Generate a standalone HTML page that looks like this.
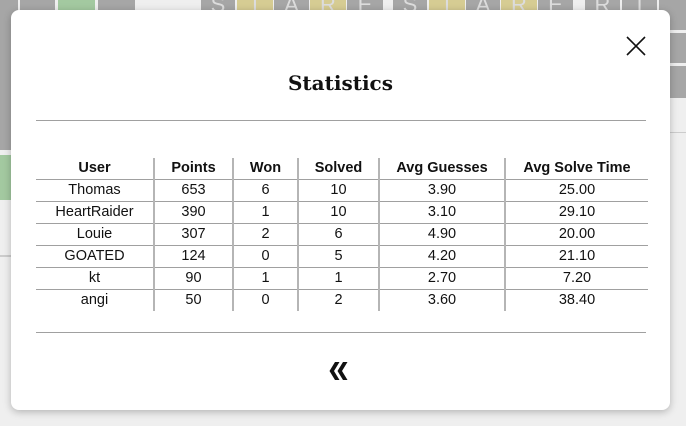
<!DOCTYPE html>
<html><head><style>
html,body{margin:0;padding:0}
body{width:686px;height:426px;position:relative;overflow:hidden;background:#efefef;font-family:"Liberation Sans",sans-serif}
.t{position:absolute;background:#a6a6a6;color:#ddd;font-size:22px;text-align:center;line-height:10px}
.y{background:#d6cc93}.g{background:#a3c9a0}
.modal{position:absolute;left:11px;top:10px;width:659px;height:400px;background:#fff;border-radius:8px;box-shadow:0 2px 8px rgba(0,0,0,.25)}
h1{position:absolute;left:0;right:0;top:59px;margin:0;text-align:center;font-family:"DejaVu Serif","Liberation Serif",serif;font-weight:bold;font-size:20px;color:#111;line-height:28px}
.hr{position:absolute;left:25px;width:610px;height:1px;background:#a0a0a0}
table{position:absolute;left:25px;top:148px;border-collapse:collapse;font-size:14.5px;color:#111}
td,th{padding:0;text-align:center;height:21px;line-height:21px}
th{font-weight:bold;height:21px;font-size:14.5px}
td+td,th+th{border-left:2px solid #b5b5b5}
tr{border-bottom:1px solid #a0a0a0}
tr:last-child{border-bottom:none}
.x{position:absolute;left:614px;top:25px}
.ch{position:absolute;left:317px;top:352px}
</style></head><body>
<div class="t" style="left:0;top:0;width:18px;height:150px"></div>
<div class="t" style="left:0;top:155px;width:18px;height:45px;background:#a3c9a0"></div>
<div class="t" style="left:20px;top:0;width:35px;height:10px"></div>
<div class="t g" style="left:58px;top:0;width:37px;height:10px"></div>
<div class="t" style="left:98px;top:0;width:37px;height:10px"></div>
<div class="t" style="left:201px;top:0;width:34px;height:10px">S</div>
<div class="t y" style="left:237px;top:0;width:36px;height:10px">T</div>
<div class="t" style="left:274px;top:0;width:35px;height:10px">A</div>
<div class="t y" style="left:310px;top:0;width:36px;height:10px">R</div>
<div class="t" style="left:347px;top:0;width:36px;height:10px">E</div>
<div class="t" style="left:393px;top:0;width:34px;height:10px">S</div>
<div class="t y" style="left:429px;top:0;width:36px;height:10px">T</div>
<div class="t" style="left:466px;top:0;width:34px;height:10px">A</div>
<div class="t y" style="left:501px;top:0;width:36px;height:10px">R</div>
<div class="t" style="left:538px;top:0;width:35px;height:10px">E</div>
<div class="t" style="left:585px;top:0;width:35px;height:10px">R</div>
<div class="t" style="left:622px;top:0;width:35px;height:10px">I</div>
<div class="t" style="left:659px;top:0;width:27px;height:30px"></div>
<div class="t" style="left:659px;top:33px;width:27px;height:30px"></div>
<div class="t" style="left:659px;top:66px;width:27px;height:32px"></div>
<div style="position:absolute;left:0;top:255px;width:20px;height:2px;background:#ccc"></div>
<div style="position:absolute;left:670px;top:132px;width:16px;height:1px;background:#ccc"></div>
<div class="modal">
<svg class="x" width="22" height="22" viewBox="0 0 22 22"><path d="M2 2L20 20M20 2L2 20" stroke="#111" stroke-width="1.6"/></svg>
<h1>Statistics</h1>
<div class="hr" style="top:110px"></div>
<table>
<tr><th style="width:117px">User</th><th style="width:77px">Points</th><th style="width:63px">Won</th><th style="width:79px">Solved</th><th style="width:124px">Avg Guesses</th><th style="width:142px">Avg Solve Time</th></tr>
<tr><td>Thomas</td><td>653</td><td>6</td><td>10</td><td>3.90</td><td>25.00</td></tr>
<tr><td>HeartRaider</td><td>390</td><td>1</td><td>10</td><td>3.10</td><td>29.10</td></tr>
<tr><td>Louie</td><td>307</td><td>2</td><td>6</td><td>4.90</td><td>20.00</td></tr>
<tr><td>GOATED</td><td>124</td><td>0</td><td>5</td><td>4.20</td><td>21.10</td></tr>
<tr><td>kt</td><td>90</td><td>1</td><td>1</td><td>2.70</td><td>7.20</td></tr>
<tr><td>angi</td><td>50</td><td>0</td><td>2</td><td>3.60</td><td>38.40</td></tr>
</table>
<div class="hr" style="top:322px"></div>
<svg class="ch" width="24" height="18" viewBox="0 0 24 18"><path d="M7 0H11.5L6 9L11.5 18H7L1.5 9Z M15 0H19.5L14 9L19.5 18H15L9.5 9Z" fill="#111"/></svg>
</div>
</body></html>
